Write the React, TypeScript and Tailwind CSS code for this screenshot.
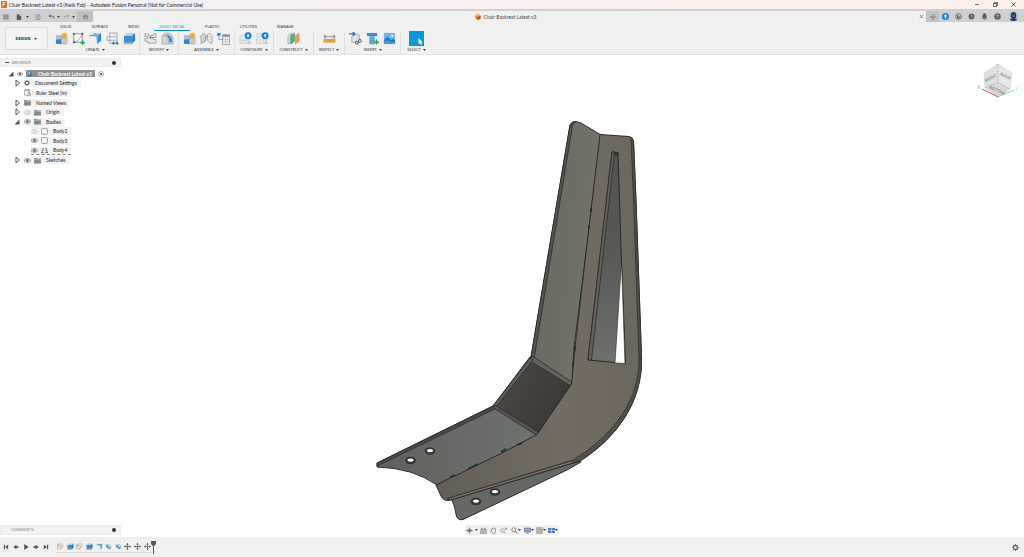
import type { ReactNode } from 'react'

type IconProps = { name: string; className?: string }

// 14x14 drawings used by the ribbon, the timeline and the small bars
const drawings: Record<string, ReactNode> = {
  component: (
    <>
      <path d="M1 4h6v9H2.500Q1 13 1 11.500z" fill="#9fc4e6" />
      <path d="M1 8h6v5H2.500Q1 13 1 11.500z" fill="#2f86cf" />
      <path d="M7 6h6v5.500Q13 13 11.500 13H7z" fill="#c9cdd0" stroke="#8b9095" strokeWidth=".5" />
      <path d="M1 4h6v9" fill="none" stroke="#6f9cc3" strokeWidth=".5" />
      <path d="M10 0l.8 2 2-.7-.8 2 2 .7-2 .8.8 2-2-.8-.8 2-.8-2-2 .8.8-2-2-.8 2-.7-.8-2 2 .7z" fill="#f3a32a" />
    </>
  ),
  sketch: (
    <>
      <path d="M2 2h9v9H2z" fill="#fafafa" stroke="#6d7276" strokeWidth=".8" />
      <path d="M2 11Q8 10 11 2" fill="none" stroke="#8d9296" strokeWidth=".7" />
      <path d="M1 1h2v2H1zM10 1h2v2h-2zM1 10h2v2H1z" fill="#55595c" />
      <path d="M9 11.500h5M11.500 9v5" stroke="#22a24a" strokeWidth="1.500" />
    </>
  ),
  flange: (
    <>
      <path d="M0 4Q4 1 8 1h5Q8 2 6 5z" fill="#a8d1f2" />
      <path d="M13 1v8l-4 4V6Q9 3 13 1z" fill="#2f86cf" />
      <path d="M0 4Q8 3 9 6v7" fill="none" stroke="#4c93cf" strokeWidth=".8" />
      <path d="M5 2Q10 2 9 8" fill="none" stroke="#69aee2" strokeWidth="2" />
    </>
  ),
  unfold: (
    <>
      <path d="M4 1h8v11H4V9H1V5h3z" fill="#eceef0" stroke="#8a8f93" strokeWidth=".7" />
      <path d="M4 5h8M4 9h8M4 5v4" stroke="#8a8f93" strokeWidth=".6" />
      <path d="M7 12h6M8.500 10.500L7 12l1.500 1.500M11.500 10.500L13 12l-1.500 1.500" fill="none" stroke="#1d77bd" strokeWidth="1.100" />
    </>
  ),
  extrude: (
    <>
      <path d="M1 4h9v9H1z" fill="#3b8dce" />
      <path d="M1 4l3-3h9l-3 3z" fill="#a9d2f3" />
      <path d="M10 4l3-3v8l-3 4z" fill="#2878b9" />
      <path d="M1 11h9v2H1z" fill="#9fb3c1" />
    </>
  ),
  modify: (
    <>
      <path d="M1 2h4v2h5V2h3v4h-3v2h3v4H4v-2H1V7h3V5H1z" fill="#e6e8ea" stroke="#85898d" strokeWidth=".7" />
      <path d="M6 6h5M8 4.500L6 6l2 1.500" fill="none" stroke="#696d70" strokeWidth=".8" />
    </>
  ),
  fillet: (
    <>
      <path d="M1 13V6Q2 1 7 1t6 6v6z" fill="#d3d5d7" stroke="#95999c" strokeWidth=".7" />
      <path d="M5 3Q10 2 12 8v3H9Q9 6 5 3z" fill="#3a90d2" />
      <path d="M2 4Q8 3 8 13" fill="none" stroke="#999da0" strokeWidth=".7" />
    </>
  ),
  joint: (
    <>
      <path d="M1 12V4l3-3 2 2v6l-3 3z" fill="#cfd2d4" stroke="#7f8488" strokeWidth=".6" />
      <path d="M13 12V4l-3-3-2 2v6l3 3z" fill="#dfe1e3" stroke="#7f8488" strokeWidth=".6" />
      <path d="M5 11L8 3" stroke="#7f8488" strokeWidth=".7" />
    </>
  ),
  structure: (
    <>
      <path d="M6 3h7.500v10.500H6z" fill="#f1f1f1" stroke="#7f8488" strokeWidth=".7" />
      <path d="M6 3h7.500v2H6z" fill="#85898c" />
      <path d="M6 8h7M6 10.500h7M9.500 5v8" stroke="#a8acaf" strokeWidth=".6" />
      <path d="M0 1h4v3H0z" fill="#3b8dce" />
      <path d="M2 4v4h4" fill="none" stroke="#4c7698" strokeWidth=".6" />
    </>
  ),
  configure: (
    <>
      <path d="M1 5l3-2h6v9H1z" fill="#e6e8ea" stroke="#c2c5c7" strokeWidth=".7" />
      <path d="M3 9h6" stroke="#c2c5c7" />
      <path d="M10 9l1 1 1.500 0 0 1.500 1 1-2.500 1-2-1z" fill="#c8cbcd" />
      <circle cx="9.800" cy="4" r="3.700" fill="#1583d3" />
      <path d="M9.800 2l1.600 2h-1v2H9.200V4h-1z" fill="#fff" />
    </>
  ),
  table: (
    <>
      <path d="M1 2h10v10H1z" fill="#f5f5f5" stroke="#b2b5b7" strokeWidth=".7" />
      <path d="M1 5h10M1 8.500h10M4.500 2v10M8 2v10" stroke="#c2c5c7" strokeWidth=".7" />
      <path d="M10 9l1 1 1.500 0 0 1.500 1 1-2.500 1-2-1z" fill="#c8cbcd" />
      <circle cx="9.800" cy="4" r="3.700" fill="#1583d3" />
      <path d="M9.800 2l1.600 2h-1v2H9.200V4h-1z" fill="#fff" />
    </>
  ),
  plane: (
    <>
      <path d="M1 4l4-3v10l-4 2z" fill="#d9dcde" stroke="#8c9093" strokeWidth=".6" />
      <path d="M4 4l4-3v9l-4 3z" fill="#4ab678" stroke="#35875a" strokeWidth=".5" />
      <path d="M9 4l4-3v9l-4 3z" fill="#ee9a63" stroke="#d58253" strokeWidth=".5" />
    </>
  ),
  measure: (
    <>
      <path d="M1.500 3v4M12.500 3v4M1.500 5h11M3.500 3.500L2 5l1.500 1.500M10.500 3.500L12 5l-1.500 1.500" fill="none" stroke="#777c80" strokeWidth=".8" />
      <path d="M1 8h12v3H1z" fill="#e5a52e" stroke="#ba7c12" strokeWidth=".5" />
    </>
  ),
  insert: (
    <>
      <path d="M3 5l2-2h6v8H3z" fill="#e1e4e6" stroke="#8f9498" strokeWidth=".7" />
      <path d="M0 2h6M4 0l2.500 2L4 4" fill="none" stroke="#1d77bd" strokeWidth="1.300" />
      <circle cx="8.500" cy="11.500" r="1.600" fill="none" stroke="#51565a" />
      <circle cx="11.600" cy="9.500" r="1.600" fill="none" stroke="#51565a" />
    </>
  ),
  fastener: (
    <>
      <path d="M1 1h11v3.500H1z" fill="#3b8dce" />
      <path d="M4 4.500h5V13H4z" fill="#77b4e2" stroke="#3b8dce" strokeWidth=".5" />
      <path d="M4 7h5M4 9h5M4 11h5" stroke="#4179a5" strokeWidth=".6" />
      <path d="M8.500 11h5.500M11.200 8.200v5.500" stroke="#22a24a" strokeWidth="1.500" />
    </>
  ),
  picture: (
    <>
      <path d="M1 1h12v12H1z" fill="#6db4ea" />
      <path d="M1 9l4-4 4 4 2-2 2 2v4H1z" fill="#2577b8" />
      <path d="M1 10l3-1 9 2v2H1z" fill="#4a98d4" />
      <circle cx="10" cy="4" r="1.300" fill="#d9effd" />
    </>
  ),
  bend: <path d="M1 4l3-2h8v8l-3 3V6Q8 4 1 4z" fill="#4796d4" stroke="#9ac3e3" strokeWidth=".8" />,
  sketchStep: (
    <>
      <path d="M1 2h11M1 2v10h6M4 2v6M1 6h8" fill="none" stroke="#a3a7aa" strokeWidth="1.200" />
      <path d="M5 12l7-8 1.500 1.500L7 13z" fill="#d7a96e" />
    </>
  ),
  fold: (
    <>
      <path d="M1 3l5 1 2 4 5 2-4 2.500-6-3z" fill="#4f9bd8" />
      <path d="M5 2Q10 2 11 7M9 6l2 2 2-2" fill="none" stroke="#7d8488" />
    </>
  ),
  move: (
    <>
      <path d="M7 1v12M1 7h12" stroke="#4b4b4b" strokeWidth="1.300" />
      <path d="M7 0l2.500 3h-5zM7 14l2.500-3h-5zM0 7l3-2.500v5zM14 7l-3-2.500v5z" fill="#4b4b4b" />
    </>
  ),
  apps: <path d="M1 1h3v3H1zM5.500 1h3v3h-3zM10 1h3v3h-3zM1 5.500h3v3H1zM5.500 5.500h3v3h-3zM10 5.500h3v3h-3zM1 10h3v3H1zM5.500 10h3v3h-3zM10 10h3v3h-3z" fill="#666" />,
  file: <path d="M2 1h6l4 4v9H2zM8 1v4h4" fill="#555" stroke="#777" strokeWidth=".7" />,
  save: (
    <>
      <path d="M2 2h10v11H2z" fill="#c6c6c6" stroke="#888" />
      <path d="M4 2h6v4H4zM4 9h6v4H4z" fill="none" stroke="#888" />
    </>
  ),
  undo: <path d="M5 3L2 6l3 3M2 6h6q4 0 4 5" fill="none" stroke="#555" strokeWidth="1.800" />,
  redo: <path d="M9 3l3 3-3 3M12 6H6q-4 0-4 5" fill="none" stroke="#999" strokeWidth="1.800" />,
  home: <path d="M7 2l6 5h-1.500v6h-3V9h-3v4h-3V7H1z" fill="#8c8c8c" />,
  plus: <path d="M7 0v14M0 7h14" stroke="#777" strokeWidth="2" />,
  close: <path d="M2 2l10 10M12 2L2 12" stroke="#555" strokeWidth="1.800" />,
  extension: (
    <>
      <circle cx="7" cy="7" r="7" fill="#1583d3" />
      <path d="M7 2.500l3 3.500-2 2.500v3H6v-3L4 6z" fill="#fff" />
    </>
  ),
  jobs: (
    <>
      <circle cx="7" cy="7" r="5.500" fill="#ddd" stroke="#5d5d5d" strokeWidth="1.800" />
      <path d="M4 4l3 .5V7h4v2L8 11H4z" fill="#666" />
    </>
  ),
  clock: (
    <>
      <circle cx="7" cy="7" r="6" fill="#666" />
      <path d="M7 4v3l3 1" fill="none" stroke="#bbb" />
    </>
  ),
  bell: <path d="M7 0q4 1 4 6v3l2 2H1l2-2V6q0-5 4-6zM5 12h4l-2 2z" fill="#5b5b5b" />,
  help: (
    <>
      <circle cx="7" cy="7" r="6.500" fill="#606060" />
      <path d="M5 5.500q0-2 2-2t2 1.800Q9 6.500 7 7.500v1M7 9.500v1.500" fill="none" stroke="#ddd" strokeWidth="1.300" />
    </>
  ),
  avatar: (
    <>
      <circle cx="7" cy="7" r="7" fill="#a9bdd2" />
      <path d="M3 4q0-4 4-4t4 4v4L9 10l3 1v2q-5 2-10 0v-2l3-1-2-2z" fill="#263a5a" />
      <path d="M5 4q2 1 4 0v3q-2 2-4 0z" fill="#5b6880" />
    </>
  ),
  eye: (
    <>
      <path d="M0 7q7-8 14 0-7 8-14 0z" fill="#ddd" stroke="#777" strokeWidth="1.300" />
      <circle cx="7" cy="7" r="2.600" fill="#666" />
    </>
  ),
  hidden: (
    <>
      <path d="M0 7q7-8 14 0-7 8-14 0z" fill="#f4f4f4" stroke="#b5b5b5" />
      <circle cx="7" cy="7" r="2" fill="none" stroke="#b5b5b5" />
    </>
  ),
  folder: (
    <>
      <path d="M0 2h5l1 1h8v10H0z" fill="#8f8f8f" />
      <path d="M0 5h14" stroke="#c4c4c4" />
      <path d="M4 6v7M8 6v7" stroke="#777" />
    </>
  ),
  gear: (
    <>
      <circle cx="7" cy="7" r="4" fill="none" stroke="#666" strokeWidth="2.600" />
      <path d="M7 0v3M7 11v3M0 7h3M11 7h3M2 2l2 2M10 10l2 2M12 2l-2 2M4 10l-2 2" stroke="#666" strokeWidth="1.800" />
    </>
  ),
  rule: (
    <>
      <path d="M1 3l2-2h8v7M1 3v9h6M1 3h8v5" fill="none" stroke="#888" strokeWidth="1.200" />
      <path d="M7 13l1-4h5v4z" fill="#e9e9e9" stroke="#777" />
    </>
  ),
  body: (
    <>
      <rect x="1" y="1" width="12" height="12" rx="3" fill="#fff" stroke="#75797d" strokeWidth="1.300" />
      <path d="M4 9v2h3M9 5h2" fill="none" stroke="#b2b6b9" />
    </>
  ),
  sheetBody: <path d="M2 11l2-8h2M4 7h1M9 3h2l1 8M9 7h3M0 11h5M8 11h6" fill="none" stroke="#666" strokeWidth="1.600" />,
  document: (
    <>
      <path d="M2 1h10v12H2z" fill="#4d83b0" />
      <path d="M3 2h4v5H3z" fill="#8fc6ed" />
    </>
  ),
  hand: <path d="M3 8V4q1-1 2 0V2q1-1 2 0v0q1-1 2 0v1q2-1 2 1v6l-2 3H6L1 8q1-1 2 0z" fill="#eee" stroke="#666" strokeWidth="1.200" />,
  look: (
    <>
      <path d="M1 5h12v8H1zM3 5V2h2v3M9 5V2h2v3" fill="#ccc" stroke="#777" />
      <path d="M3 8h8M3 10.500h8" stroke="#777" />
    </>
  ),
  zoom: (
    <>
      <circle cx="5.500" cy="5.500" r="4" fill="#eee" stroke="#666" strokeWidth="1.400" />
      <path d="M8.500 8.500l4.500 4.500" stroke="#666" strokeWidth="2" />
    </>
  ),
  zoomIn: (
    <>
      <circle cx="5" cy="7" r="3.500" fill="#eee" stroke="#777" strokeWidth="1.200" />
      <path d="M7.500 9.500L11 13M10 6l3-4M10 2h3v3" fill="none" stroke="#777" strokeWidth="1.300" />
    </>
  ),
  display: (
    <>
      <path d="M1 2h12v8H1z" fill="#87add0" stroke="#66717b" strokeWidth="1.300" />
      <path d="M4 12.500h6" stroke="#777" strokeWidth="1.500" />
    </>
  ),
  grid: (
    <>
      <path d="M1 1h12v12H1z" fill="#bbb" stroke="#999" />
      <path d="M1 5h12M1 9h12M5 1v12M9 1v12" stroke="#999" strokeWidth=".7" />
    </>
  ),
  viewports: (
    <>
      <path d="M0 2h14v10H0z" fill="#4c82b6" />
      <path d="M7 2v10M0 7h14" stroke="#d9e5ef" strokeWidth="1.200" />
    </>
  ),
  first: <path d="M2 2h2.500v10H2zM12 2v10L5 7z" fill="#4b4b4b" />,
  previous: <path d="M8 2v10L1 7zM8 5h5v4H8z" fill="#4b4b4b" />,
  play: <path d="M3 0l10 7-10 7z" fill="#4b4b4b" />,
  next: <path d="M6 2v10l7-5zM1 5h5v4H1z" fill="#4b4b4b" />,
  last: <path d="M12 2H9.500v10H12zM2 2v10l7-5z" fill="#4b4b4b" />,
  orbit: (
    <>
      <path d="M7 1v12M1 7h12" stroke="#666" strokeWidth="1.600" />
      <ellipse cx="7" cy="7" rx="5.500" ry="2.500" fill="none" stroke="#666" />
      <circle cx="7" cy="7" r="2" fill="#666" />
    </>
  ),
}

function Icon({ name, className = 'size-2' }: IconProps) {
  return (
    <svg viewBox="0 0 14 14" className={`shrink-0 ${className}`} aria-hidden="true">
      {drawings[name]}
    </svg>
  )
}

function Caret() {
  return (
    <svg viewBox="0 0 6 4" className="h-[2px] w-[3px] shrink-0" aria-hidden="true">
      <path d="M0 0h6L3 4z" fill="#444" />
    </svg>
  )
}

const tabs = ['SOLID', 'SURFACE', 'MESH', 'SHEET METAL', 'PLASTIC', 'UTILITIES', 'MANAGE']

const groups = [
  { label: 'CREATE', width: 'w-[89px]', icons: ['component', 'sketch', 'flange', 'unfold', 'extrude'] },
  { label: 'MODIFY', width: 'w-[39px]', icons: ['modify', 'fillet'] },
  { label: 'ASSEMBLE', width: 'w-[56px]', icons: ['component', 'joint', 'structure'] },
  { label: 'CONFIGURE', width: 'w-[39px]', icons: ['configure', 'table'] },
  { label: 'CONSTRUCT', width: 'w-[40px]', icons: ['plane'] },
  { label: 'INSPECT', width: 'w-[31px]', icons: ['measure'] },
  { label: 'INSERT', width: 'w-[56px]', icons: ['insert', 'fastener', 'picture'] },
]

const tree = [
  { label: 'Document Settings', indent: 'pl-[14px]', icons: ['gear'], arrow: 'closed' },
  { label: 'Rule: Steel (in)', indent: 'pl-[14px]', icons: ['rule'], arrow: 'none' },
  { label: 'Named Views', indent: 'pl-[14px]', icons: ['folder'], arrow: 'closed' },
  { label: 'Origin', indent: 'pl-[14px]', icons: ['hidden', 'folder'], arrow: 'closed' },
  { label: 'Bodies', indent: 'pl-[14px]', icons: ['eye', 'folder'], arrow: 'open' },
  { label: 'Body2', indent: 'pl-[21px]', icons: ['hidden', 'body'], arrow: 'none' },
  { label: 'Body3', indent: 'pl-[21px]', icons: ['eye', 'body'], arrow: 'none' },
  { label: 'Body4', indent: 'pl-[21px]', icons: ['eye', 'sheetBody'], arrow: 'none' },
  { label: 'Sketches', indent: 'pl-[14px]', icons: ['eye', 'folder'], arrow: 'closed' },
]

const steps = ['sketchStep', 'extrude', 'sketchStep', 'extrude', 'bend', 'fold', 'fold', 'move', 'move', 'move']

function TitleBar() {
  return (
    <header className="flex h-[11px] items-center justify-between border-b-2 border-[#d0d0d0] bg-linear-to-r from-[#f1f2f7] via-[#f9eff0] to-[#fcf0e9] pr-2 pl-px">
      <div className="flex items-center gap-[2px]">
        <svg viewBox="0 0 6 7" className="h-[7px] w-[6px]" aria-hidden="true">
          <rect width="6" height="7" rx="1" fill="#ee6a1a" />
          <path d="M2 5.500v-4h2.500M2 3.500h2" fill="none" stroke="#fff" strokeWidth=".8" />
        </svg>
        <h1 className="text-[5px] leading-[8px] text-[#222]">
          Chair Backrest Latest v3 (Kwik Fab) - Autodesk Fusion Personal (Not for Commercial Use)
        </h1>
      </div>
      <div className="flex items-center gap-[13px]">
        <button aria-label="Minimize">
          <svg viewBox="0 0 5 5" className="size-[5px]"><path d="M0 2.500h4" stroke="#333" strokeWidth=".7" /></svg>
        </button>
        <button aria-label="Restore">
          <svg viewBox="0 0 5 5" className="size-[5px]"><path d="M.5 1.500h3v3h-3zM1.500 1.500v-1h3v3h-1" fill="none" stroke="#333" strokeWidth=".7" /></svg>
        </button>
        <button aria-label="Close">
          <svg viewBox="0 0 5 5" className="size-[5px]"><path d="M.5.500l4 4M4.500.500l-4 4" stroke="#333" strokeWidth=".7" /></svg>
        </button>
      </div>
    </header>
  )
}

function DocumentBar() {
  return (
    <div className="flex h-[11px] items-stretch bg-[#f0f0f0]">
      <div className="flex items-center bg-[#d0d0d0] pl-[3px]">
        <button aria-label="Show data panel"><Icon name="apps" className="size-[6px]" /></button>
        <button aria-label="File" className="ml-[7px] flex items-center gap-1"><Icon name="file" className="size-[6px]" /><Caret /></button>
        <button aria-label="Save" className="ml-[6px]"><Icon name="save" className="size-[6px]" /></button>
        <button aria-label="Undo" className="ml-[7px] flex items-center gap-[2px]"><Icon name="undo" className="size-[7px]" /><Caret /></button>
        <button aria-label="Redo" className="ml-[3px] flex items-center gap-[2px]"><Icon name="redo" className="size-[7px]" /><Caret /></button>
        <button aria-label="Home" className="ml-[2px] flex h-full w-4 items-center justify-center bg-[#bfbfbf]"><Icon name="home" className="size-[7px]" /></button>
      </div>
      <div className="flex flex-1 items-center">
        <div className="flex flex-1 items-center justify-center gap-[2px] text-[5px] leading-[8px] text-[#444]">
          <svg viewBox="0 0 12 12" className="size-[6px]" aria-hidden="true">
            <path d="M1 3l5-3 5 3v6l-5 3-5-3z" fill="#e96b1c" />
            <path d="M1 3l5-3 5 3-5 3z" fill="#f8a96c" />
            <path d="M6 6l5-3v6l-5 3z" fill="#c94f10" />
          </svg>
          Chair Backrest Latest v3
        </div>
        <button aria-label="Close document" className="mr-[2px]"><Icon name="close" className="size-[5px]" /></button>
      </div>
      <div className="flex items-center bg-[#d0d0d0] pr-[6px]">
        <button aria-label="New document" className="flex h-full w-[13px] items-center justify-center bg-[#c2c2c2]"><Icon name="plus" className="size-[6px]" /></button>
        <div className="flex items-center gap-[6px] pl-[3px]">
          <button aria-label="Extensions"><Icon name="extension" className="size-[7px]" /></button>
          <button aria-label="Job status"><Icon name="jobs" className="size-[7px]" /></button>
          <button aria-label="Recent"><Icon name="clock" className="size-[7px]" /></button>
          <button aria-label="Notifications"><Icon name="bell" className="size-[7px]" /></button>
          <button aria-label="Help"><Icon name="help" className="size-[7px]" /></button>
          <button aria-label="Account" className="ml-[2px]"><Icon name="avatar" className="size-[9px]" /></button>
        </div>
      </div>
    </div>
  )
}

function Ribbon() {
  return (
    <div className="flex h-[33px] border-b border-[#e2e2e2] bg-[#f1f1f1] pl-[5px] font-['Open_Sans','Noto_Sans',sans-serif] text-[4px] leading-[6px] text-[#222]">
      <button className="mt-[5px] flex h-[23px] w-[43px] items-center justify-center gap-1 rounded-xs border border-[#dcdcdc] bg-[#f4f4f4] font-bold">
        DESIGN <Caret />
      </button>
      <div className="ml-[3px]">
        <nav className="flex h-[9px] gap-[10px] pl-1">
          {tabs.map((tab) => (
            <button
              key={tab}
              className={tab === 'SHEET METAL' ? 'border-b border-[#0a8fd0] px-[5px] pt-[2px] text-[#0a8fd0]' : 'px-[5px] pt-[2px] pb-px'}
            >
              {tab}
            </button>
          ))}
        </nav>
        <div className="flex">
          {groups.map((group) => (
            <div key={group.label} className={`flex h-[23px] flex-col items-center gap-[2px] border-r border-[#e0e0e0] pt-px ${group.width}`}>
              <div className="flex gap-1">
                {group.icons.map((icon) => (
                  <button key={icon} aria-label={icon}><Icon name={icon} className="size-[13px]" /></button>
                ))}
              </div>
              <button className="flex items-center gap-[2px]">{group.label} <Caret /></button>
            </div>
          ))}
          <div className="flex w-[31px] flex-col items-center gap-px">
            <button aria-label="Select tool" className="bg-[#0b96d8]">
              <svg viewBox="0 0 15 15" className="size-[15px]" aria-hidden="true">
                <path d="M1.500 10h8" stroke="#6cc3ea" strokeWidth=".7" strokeDasharray="1 1" />
                <path d="M9.500 7v6l1.500-1 1 2 1-.5-1-2h1.800z" fill="#fff" />
              </svg>
            </button>
            <button className="flex items-center gap-[2px]">SELECT <Caret /></button>
          </div>
        </div>
      </div>
    </div>
  )
}

function Arrow({ kind }: { kind: string }) {
  if (kind === 'none') return <span className="w-[6px] shrink-0" />
  return (
    <button aria-label="Toggle" className="shrink-0">
      <svg viewBox="0 0 12 12" className="size-[6px]">
        {kind === 'open' ? <path d="M11 1v10H1z" fill="#555" /> : <path d="M4 0v12l7-6z" fill="#fff" stroke="#444" strokeWidth="1.800" />}
      </svg>
    </button>
  )
}

function Browser() {
  return (
    <aside className="absolute top-[3px] left-0 w-[121px] text-[5px] leading-[8px] text-[#222]">
      <div className="flex h-[9px] items-center border border-[#ececec] bg-[#f4f4f4] px-1">
        <span className="h-px w-[4px] bg-[#555]" />
        <h2 className="ml-[3px] flex-1 font-['Open_Sans','Noto_Sans',sans-serif] text-[4px] text-[#777]">BROWSER</h2>
        <span className="size-1 rounded-full bg-[#333]" />
      </div>
      <ul className="mt-[2px] grid h-24 grid-rows-10">
        <li className="flex items-center gap-[3px] pl-2">
          <Arrow kind="open" />
          <Icon name="eye" className="size-[6px]" />
          <span className="flex h-[7px] items-center gap-[5px] bg-[#909090] pr-[3px] pl-px font-bold text-white">
            <Icon name="document" className="size-[6px]" />
            Chair Backrest Latest v3
          </span>
          <svg viewBox="0 0 12 12" className="size-[6px]" aria-hidden="true">
            <circle cx="6" cy="6" r="5" fill="#fff" stroke="#666" />
            <circle cx="6" cy="6" r="2" fill="#444" />
          </svg>
        </li>
        {tree.map((row) => (
          <li key={row.label} className={`flex items-center gap-1 ${row.indent}`}>
            <Arrow kind={row.arrow} />
            <span className={`flex h-2 items-center gap-[3px] bg-[#f3f3f3] pr-1 ${row.label === 'Body4' ? 'border-b border-dashed border-[#888]' : ''}`}>
              {row.icons.map((icon) => (
                <Icon key={icon} name={icon} className={icon === 'gear' ? 'size-[6px]' : 'size-[7px]'} />
              ))}
              <span className="ml-[2px]">{row.label}</span>
            </span>
          </li>
        ))}
      </ul>
    </aside>
  )
}

function ViewCube() {
  return (
    <svg viewBox="0 0 46 40" className="absolute top-[6px] right-[3px] h-10 w-[46px]" role="img" aria-label="View cube">
      <path d="M23 3L9 12l1 15 13 9 12-8 2-16z" fill="#e9e9e9" stroke="#b9b9b9" strokeWidth=".6" strokeDasharray="2 1" />
      <path d="M23 3v18L10 27 9 12z" fill="#e0e0e0" />
      <path d="M23 3v18l12 7 2-16z" fill="#e8e8e8" />
      <path d="M23 21l12 7-12 8-13-9z" fill="#d8d8d8" />
      <path d="M23 3v18M23 21l-13 6M23 21l12 7" stroke="#999" strokeWidth=".6" strokeDasharray="2 1" />
      <g className="font-['Liberation_Sans'] text-[4px] font-bold" fill="#8d8d8d">
        <text x="11" y="21" transform="rotate(-28 11 21)">RIGHT</text>
        <text x="25" y="14" transform="rotate(25 25 14)">BACK</text>
        <text x="14" y="27" transform="rotate(25 14 27)">BOTTOM</text>
      </g>
      <path d="M7 28l16 8" stroke="#d9505c" strokeWidth="1" />
      <path d="M23 36l16-7" stroke="#7fdc86" strokeWidth="1" />
      <g className="font-['Liberation_Sans'] text-[5px]">
        <text x="2" y="28" fill="#ee7b84">X</text>
        <text x="40" y="30" fill="#8ee394">Y</text>
      </g>
    </svg>
  )
}

function Hole({ x, y }: { x: number; y: number }) {
  return (
    <>
      <ellipse cx={x} cy={y} rx="4.800" ry="3.200" fill="#3b3c39" stroke="#242422" strokeWidth=".7" />
      <ellipse cx={x} cy={y - 0.4} rx="3" ry="1.700" fill="#fff" />
    </>
  )
}

function Model() {
  return (
    <svg viewBox="376 120 272 402" className="h-[402px] w-[272px]" role="img" aria-label="Chair backrest bracket">
      <defs>
        <linearGradient id="upper" x1="0" y1="0" x2="1" y2="0.300">
          <stop offset="0" stopColor="#656761" />
          <stop offset="1" stopColor="#75736b" />
        </linearGradient>
        <linearGradient id="plate" x1="0" y1="0" x2="1" y2="0">
          <stop offset="0" stopColor="#625e56" />
          <stop offset="0.600" stopColor="#736c62" />
          <stop offset="1" stopColor="#6c675e" />
        </linearGradient>
        <linearGradient id="lower" x1="0" y1="0" x2="1" y2="0">
          <stop offset="0" stopColor="#5f605d" />
          <stop offset="1" stopColor="#6f736f" />
        </linearGradient>
        <linearGradient id="seat" x1="0" y1="0" x2="1" y2="0.500">
          <stop offset="0" stopColor="#514c47" />
          <stop offset="1" stopColor="#393735" />
        </linearGradient>
        <linearGradient id="slot" x1="0" y1="0" x2="0" y2="1">
          <stop offset="0" stopColor="#51514e" />
          <stop offset="0.500" stopColor="#585a57" />
          <stop offset="1" stopColor="#6f716d" />
        </linearGradient>
      </defs>
      <g stroke="#292927" strokeWidth="1" strokeLinejoin="round">
        {/* rear lower flange */}
        <path d="M451 498q4 8 5 16 1 7 7 5.500L567 470l14-8-10-4z" fill="#666864" />
        {/* upper flange and its outer thickness */}
        <path d="M531 357L570 125q2-4 6-3.500l5 1.500 20 12-27 213-2 37z" fill="url(#upper)" />
        <path d="M531 357L570 125q2-4 6-3.500-3 1-3.500 4L534 359z" fill="#555650" strokeWidth=".8" />
        {/* bend face */}
        <path d="M530 357l43 27-35 51-45-29z" fill="url(#seat)" />
        <path d="M532 356l40 26-1 4-41-25z" fill="#62625d" strokeWidth=".8" />
        <path d="M530 358l-37 48 3 1 37-47z" fill="#5d5e59" strokeWidth=".7" />
        {/* lower flange */}
        <path d="M493 406l-116 57v4q36 1 60 18l66-30 35-20z" fill="url(#lower)" />
        <path d="M493 406l-116 57v3l118-57z" fill="#484946" strokeWidth=".7" />
        <path d="M495 405l44 27-2 3.500-44-28z" fill="#55544f" strokeWidth=".8" />
        {/* side plate */}
        <path
          d="M600 134.500L629 136.500Q633 137 633.500 141L636 200 641.500 357C643 400 618 437 580 461L449 500.500Q444 501 441.500 497L436 485 500 454 537 434.500 571.500 384 575 347 589 227z"
          fill="url(#plate)"
        />
        <path
          d="M631 139q2 .5 2.500 2L636 200 641.500 357C643 400 618 437 580 461L449 500.500 447 498.500 573 460C614 435 640 400 639 357L633.500 200z"
          fill="#504f4a"
          strokeWidth=".7"
        />
        <path d="M450 499l122-37" stroke="#8e897e" strokeWidth=".8" />
        {/* slot */}
        <path d="M612 152l6 .5 3.500 110L625.500 363.500 588 360z" fill="url(#slot)" />
        <path d="M612 152h2.500L591.500 360H588z" fill="#66615a" strokeWidth=".8" />
        <path d="M614 153h4v2h-4z" fill="#333" strokeWidth=".5" />
        <path d="M621.500 262l-6.500 101 10 .5z" fill="#fff" strokeWidth=".6" />
        {/* weld tabs along the bend */}
        <path d="M591 208v4M589 225v4M575 346v5M573 362v4M450 477l5-2M468 469l10-5M501 452l5-3M517 445l5-2" strokeWidth="1.600" fill="none" />
        <path d="M639 358h3" strokeWidth="1" />
      </g>
      <Hole x={410.500} y={460.500} />
      <Hole x={430} y={451} />
      <Hole x={476} y={501.500} />
      <Hole x={495} y={492} />
    </svg>
  )
}

function ViewBar() {
  return (
    <div className="absolute bottom-[2px] left-1/2 flex h-[10px] w-[94px] -translate-x-1/2 items-center justify-between bg-[#f2f2f2] px-px">
      <button aria-label="Orbit" className="flex items-center gap-[2px]"><Icon name="orbit" className="size-[7px]" /><Caret /></button>
      <button aria-label="Look at"><Icon name="look" className="size-[7px]" /></button>
      <button aria-label="Pan" className="ml-px"><Icon name="hand" className="size-[7px]" /></button>
      <button aria-label="Zoom" className="ml-px"><Icon name="zoomIn" className="size-[7px]" /></button>
      <button aria-label="Fit" className="ml-px flex items-center"><Icon name="zoom" className="size-[7px]" /><Caret /></button>
      <button aria-label="Display settings" className="ml-px flex items-center"><Icon name="display" className="size-[7px]" /><Caret /></button>
      <button aria-label="Grid and snaps" className="flex items-center"><Icon name="grid" className="size-[7px]" /><Caret /></button>
      <button aria-label="Viewports" className="flex items-center"><Icon name="viewports" className="size-[7px]" /><Caret /></button>
    </div>
  )
}

function Timeline() {
  return (
    <footer className="flex h-5 items-center bg-[#f0f0f0] pr-[5px] pl-px">
      <div className="grid w-[50px] grid-cols-5 justify-items-center">
        {['first', 'previous', 'play', 'next', 'last'].map((name) => (
          <button key={name} aria-label={name}><Icon name={name} className="size-[6px]" /></button>
        ))}
      </div>
      <div className="ml-[5px] flex h-[13px] items-start">
        <div className="grid h-[12px] w-[96px] grid-cols-10 items-center justify-items-center border-b border-[#e5d8cc]">
          {steps.map((name, i) => (
            <button key={i} aria-label={`Step ${i + 1}`}><Icon name={name} className="size-[7px]" /></button>
          ))}
        </div>
        <svg viewBox="0 0 5 13" className="-ml-px h-[13px] w-[5px]" aria-hidden="true">
          <path d="M0 0h5v3L3 5v8H2V5L0 3z" fill="#555" />
        </svg>
      </div>
      <button aria-label="Timeline settings" className="ml-auto"><Icon name="gear" className="size-[7px]" /></button>
    </footer>
  )
}

export default function App() {
  return (
    <div className="flex h-screen flex-col overflow-hidden bg-white font-['Lato','Noto_Sans',sans-serif]">
      <TitleBar />
      <DocumentBar />
      <Ribbon />
      <main className="relative flex min-h-0 flex-1 items-center justify-center pt-[50px]">
        <Model />
        <Browser />
        <ViewCube />
        <div className="absolute bottom-[2px] left-0 flex h-[10px] w-[121px] items-center justify-between border border-[#ececec] bg-[#f4f4f4] pr-1 pl-[10px]">
          <h2 className="font-['Open_Sans','Noto_Sans',sans-serif] text-[4px] leading-[6px] text-[#777]">COMMENTS</h2>
          <span className="size-1 rounded-full bg-[#333]" />
        </div>
        <ViewBar />
      </main>
      <Timeline />
    </div>
  )
}
